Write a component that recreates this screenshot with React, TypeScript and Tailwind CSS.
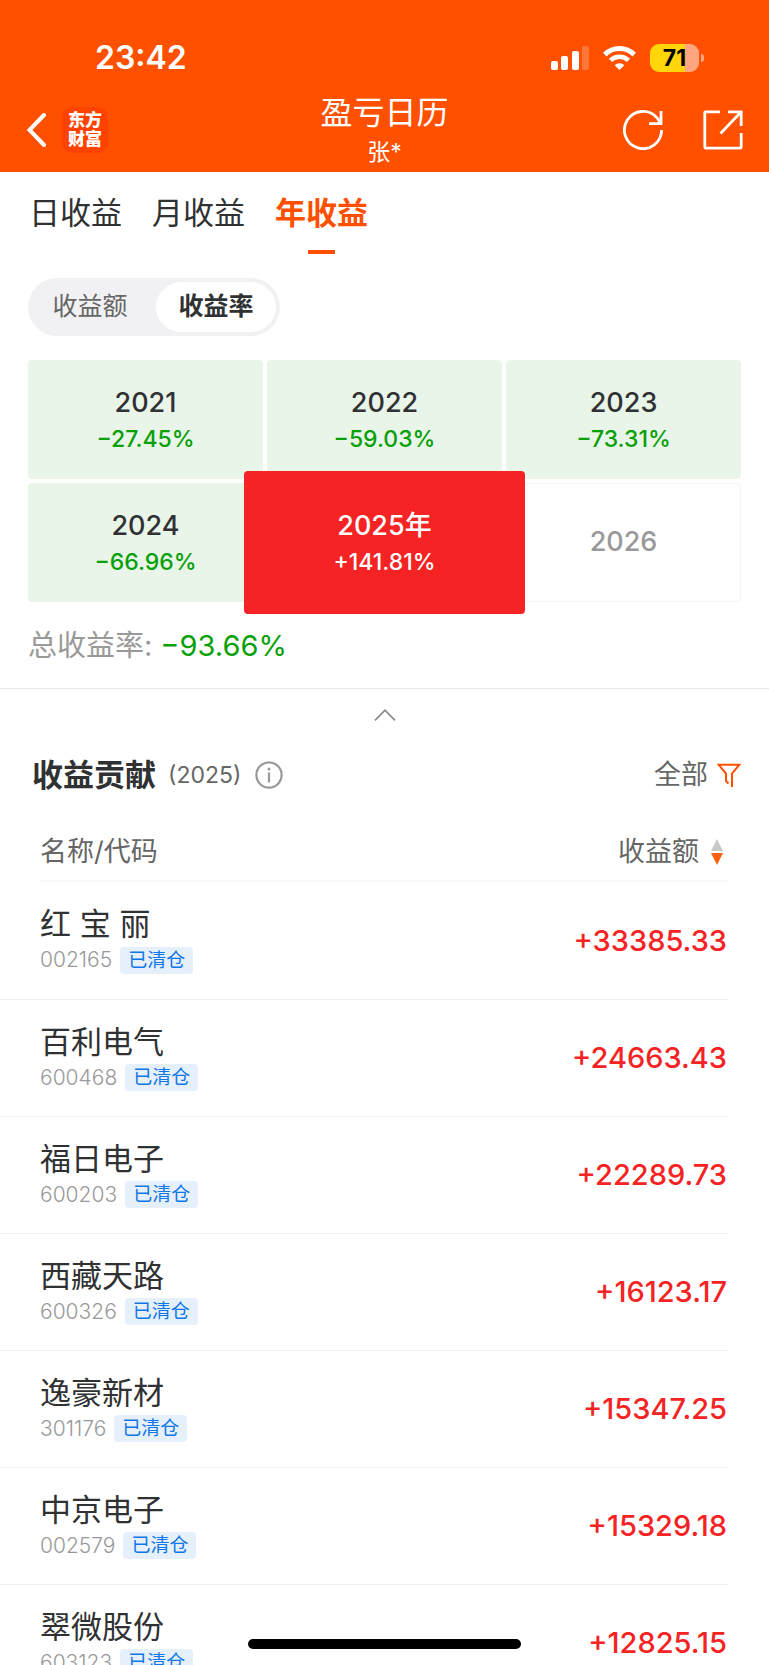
import React from 'react';

const tabs = ['日收益', '月收益', '年收益'];

const years = [
  { label: '2021', rate: '−27.45%' },
  { label: '2022', rate: '−59.03%' },
  { label: '2023', rate: '−73.31%' },
  { label: '2024', rate: '−66.96%' },
  { label: '2025年', rate: '+141.81%', active: true },
  { label: '2026' },
];

const stocks = [
  { name: '红 宝 丽', code: '002165', profit: '+33385.33' },
  { name: '百利电气', code: '600468', profit: '+24663.43' },
  { name: '福日电子', code: '600203', profit: '+22289.73' },
  { name: '西藏天路', code: '600326', profit: '+16123.17' },
  { name: '逸豪新材', code: '301176', profit: '+15347.25' },
  { name: '中京电子', code: '002579', profit: '+15329.18' },
  { name: '翠微股份', code: '603123', profit: '+12825.15' },
];

function StatusBar() {
  return (
    <div className="flex h-[88px] items-center justify-between pt-7 pr-[65px] pl-[95px]">
      <span className="text-[32px] leading-none font-semibold">23:42</span>
      <div className="flex items-center gap-[14px]">
        <svg width="38" height="24" viewBox="0 0 38 24" fill="#fff">
          <rect x="0" y="15" width="7" height="9" rx="2" />
          <rect x="10" y="10" width="7" height="14" rx="2" />
          <rect x="21" y="5" width="7" height="19" rx="2" />
          <rect x="31" y="0" width="7" height="24" rx="2" opacity="0.22" />
        </svg>
        <svg width="33" height="24" viewBox="0 0 33 24" fill="none" stroke="#fff">
          <path d="M1.8 8.6 A21 21 0 0 1 31.2 8.6" strokeWidth="5" />
          <path d="M7.5 14.4 A13 13 0 0 1 25.5 14.4" strokeWidth="4.6" />
          <path d="M11.6 19.2 A7 7 0 0 1 21.4 19.2 L16.5 24 Z" fill="#fff" stroke="none" />
        </svg>
        <div className="flex items-center gap-[2px]">
          <div className="flex h-7 w-[49px] items-center justify-center rounded-[9px] bg-linear-to-r from-[#ffd60a] from-71% to-[#ffa680] to-71%">
            <span className="text-[23px] leading-none font-bold text-black">71</span>
          </div>
          <div className="h-2 w-[3px] rounded-r-full bg-[#ffa680]" />
        </div>
      </div>
    </div>
  );
}

function NavBar() {
  return (
    <div className="grid h-[84px] grid-cols-[1fr_auto_1fr] items-center px-[26px]">
      <div className="flex items-center gap-4">
        <button aria-label="返回">
          <svg width="20" height="34" viewBox="0 0 20 34" fill="none" stroke="#fff" strokeWidth="4">
            <path d="M18 2 L3.5 17 L18 32" strokeLinecap="round" strokeLinejoin="miter" />
          </svg>
        </button>
        <div className="grid size-[46px] place-content-center rounded-[10px] bg-[#ff4200] text-center text-[17px] leading-[19px] font-black">
          <span>东方</span>
          <span>财富</span>
        </div>
      </div>
      <div className="pt-[2px] text-center">
        <h1 className="text-[32px] leading-[42px]">盈亏日历</h1>
        <p className="text-[23px] leading-9">张*</p>
      </div>
      <div className="flex items-center justify-end gap-10">
        <button aria-label="刷新">
          <svg width="40" height="40" viewBox="0 0 40 40" fill="none" stroke="#fff" strokeWidth="2.8">
            <path d="M38.6 20 A18.6 18.6 0 1 1 34 7.8 L38 13.6" />
            <path d="M38 1 V13.6 H26" />
          </svg>
        </button>
        <button aria-label="分享">
          <svg width="40" height="40" viewBox="0 0 40 40" fill="none" stroke="#fff" strokeWidth="2.8">
            <path d="M17 1.8 H2.8 Q1.8 1.8 1.8 2.8 V37.2 Q1.8 38.2 2.8 38.2 H37.2 Q38.2 38.2 38.2 37.2 V23" />
            <path d="M25 1.8 H38.2 V16" />
            <path d="M38 2 L17.5 23.5" />
          </svg>
        </button>
      </div>
    </div>
  );
}

function YearCell({ label, rate, active }: { label: string; rate?: string; active?: boolean }) {
  if (active) {
    return (
      <button className="relative z-10 -mx-[23px] -my-3 rounded-[4px] bg-[#f52323] pt-[2px] text-white">
        <span className="block text-[27px] leading-9 font-medium">{label}</span>
        <span className="block text-[23px] leading-9 font-medium">{rate}</span>
      </button>
    );
  }
  if (!rate) {
    return (
      <button className="rounded-[4px] border border-[#f5f5f5] text-[27px] font-medium text-[#999]">
        {label}
      </button>
    );
  }
  return (
    <button className="rounded-[4px] bg-[#eaf5ea] pt-[2px] text-[#303133]">
      <span className="block text-[27px] leading-9 font-medium">{label}</span>
      <span className="block text-[23px] leading-9 font-medium text-[#07a007]">{rate}</span>
    </button>
  );
}

function Contribution() {
  return (
    <section>
      <div className="flex h-[70px] items-center justify-between pr-7 pl-8">
        <div className="flex items-center">
          <h2 className="text-[31px] font-bold text-[#303133]">收益贡献</h2>
          <span className="ml-3 text-[23px] text-[#666]">(2025)</span>
          <button aria-label="说明" className="ml-[14px]">
            <svg width="28" height="28" viewBox="0 0 28 28" fill="none" stroke="#999" strokeWidth="2.2">
              <circle cx="14" cy="14" r="12.6" />
              <path d="M14 11.5 V21.5" />
              <circle cx="14" cy="8" r="1.5" fill="#999" stroke="none" />
            </svg>
          </button>
        </div>
        <button className="flex items-center gap-[9px] text-[27px] text-[#666]">
          全部
          <svg width="24" height="24" viewBox="0 0 24 24" fill="none" stroke="#ff5000" strokeWidth="2">
            <path d="M11.5 20.5 L9 18 V10.5 L1.8 1.8 H22.2 L15 10.5 V24" />
          </svg>
        </button>
      </div>

      <div className="pr-10">
        <table className="w-full text-left">
          <thead>
            <tr>
              <th className="p-0 pl-10 font-normal">
                <div className="h-[72px] border-b-2 border-[#f8f8f8] pt-[22px] text-[27px] leading-10 text-[#666]">
                  名称/代码
                </div>
              </th>
              <th className="p-0 font-normal">
                <div className="h-[72px] border-b-2 border-[#f8f8f8] pt-[22px] pr-[6px]">
                  <button className="ml-auto flex items-center gap-3 text-[27px] leading-10 text-[#666]">
                    收益额
                    <svg width="12" height="26" viewBox="0 0 12 26">
                      <path d="M6 0 L12 12 H0 Z" fill="#c8c8c8" />
                      <path d="M0 14 H12 L6 26 Z" fill="#ff6010" />
                    </svg>
                  </button>
                </div>
              </th>
            </tr>
          </thead>
          <tbody>
            {stocks.map((stock) => (
              <tr key={stock.code} className="h-[117px] border-b border-[#f0f0f0]">
                <td className="p-0 pl-10">
                  <div className="text-[31px] leading-10 text-[#303133]">{stock.name}</div>
                  <div className="flex items-center gap-2">
                    <span className="text-[21px] leading-8 font-light text-[#999]">{stock.code}</span>
                    <span className="rounded-[4px] bg-[#e6f0fb] px-2 text-[19px] leading-[27px] text-[#0f76e8]">
                      已清仓
                    </span>
                  </div>
                </td>
                <td className="p-0 pr-[2px] text-right text-[29px] font-medium text-[#f52323]">{stock.profit}</td>
              </tr>
            ))}
          </tbody>
        </table>
      </div>
    </section>
  );
}

export default function App() {
  return (
    <div className="relative h-screen overflow-hidden bg-white font-['Inter','Noto_Sans_CJK_SC',sans-serif]">
      <header className="bg-[#ff5000] text-white">
        <StatusBar />
        <NavBar />
      </header>

      <main>
        <nav className="flex gap-[30px] px-[29px]">
          {tabs.map((tab) => (
            <button
              key={tab}
              className={`flex h-[82px] flex-col items-center justify-between pt-[18px] text-[31px] leading-[46px] ${
                tab === '年收益' ? 'font-bold text-[#ff5000]' : 'text-[#303133]'
              }`}
            >
              {tab}
              {tab === '年收益' && <span className="h-1 w-[27px] bg-[#ff5000]" />}
            </button>
          ))}
        </nav>

        <div className="mt-6 ml-7 flex w-fit gap-2 rounded-full bg-[#f1f1f4] p-1 text-[25px]">
          <button className="h-[50px] w-[116px] text-[#666]">收益额</button>
          <button className="h-[50px] w-[120px] rounded-full bg-white font-bold text-[#303133]">收益率</button>
        </div>

        <div className="mt-6 grid auto-rows-[119px] grid-cols-3 gap-1 px-7">
          {years.map((year) => (
            <YearCell key={year.label} {...year} />
          ))}
        </div>

        <p className="mt-6 flex h-[63px] items-start gap-2 border-b border-[#e8e8e8] px-7 text-[29px] leading-10 text-[#999]">
          总收益率: <span className="text-[#07a007]">−93.66%</span>
        </p>

        <button aria-label="收起" className="flex h-[51px] w-full items-center justify-center">
          <svg width="22" height="12" viewBox="0 0 22 12" fill="none" stroke="#888" strokeWidth="1.6">
            <path d="M1 11.4 L11 1.2 L21 11.4" />
          </svg>
        </button>

        <Contribution />
      </main>

      <div className="fixed inset-x-0 bottom-4 mx-auto h-[10px] w-[273px] rounded-full bg-black" />
    </div>
  );
}
